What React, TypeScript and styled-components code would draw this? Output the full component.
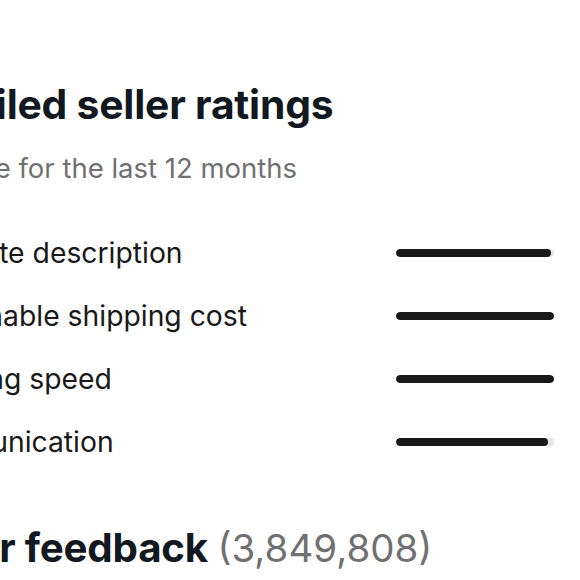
import React from "react";
import styled, { createGlobalStyle } from "styled-components";

const Global = createGlobalStyle`
  html, body { margin: 0; padding: 0; background: #ffffff; overflow: hidden; }
  body { font-family: Inter, "Noto Sans", "Liberation Sans", sans-serif; color: #111820; }
`;

const Page = styled.main`
  margin-left: -96px;
  width: calc(580px + 96px - 26px);
  padding-top: 80px;
`;

const Heading = styled.h2<{ $size: number }>`
  margin: 0;
  font-size: ${(p) => p.$size}px;
  line-height: 48px;
  font-weight: 700;
  color: #111820;
  letter-spacing: -0.2px;
`;

const Subtitle = styled.p`
  margin: 22px 0 35px;
  font-size: 27.5px;
  line-height: 36px;
  color: #707070;
`;

const RatingList = styled.ul`
  list-style: none;
  margin: 0;
  padding: 0;
  display: flex;
  flex-direction: column;
`;

const Row = styled.li`
  height: 63px;
  display: flex;
  align-items: center;
  justify-content: space-between;
`;

const Label = styled.span`
  font-size: 28.3px;
  color: #191919;
`;

const Track = styled.div`
  width: 158px;
  height: 8px;
  border-radius: 4px;
  background: #e5e5e5;
  overflow: hidden;
`;

const Fill = styled.div`
  height: 100%;
  border-radius: 4px;
  background: #191919;
`;

const FeedbackSection = styled.section`
  margin-top: 51px;
`;

const Count = styled.span`
  font-size: 38.5px;
  font-weight: 400;
  letter-spacing: 0;
  color: #707070;
`;

const ratings = [
  { label: "Accurate description", value: 98 },
  { label: "Reasonable shipping cost", value: 100 },
  { label: "Shipping speed", value: 100 },
  { label: "Communication", value: 96 },
];

export default function App() {
  return (
    <>
      <Global />
      <Page>
        <Heading $size={40.8}>Detailed seller ratings</Heading>
        <Subtitle>Average for the last 12 months</Subtitle>
        <RatingList>
          {ratings.map((r) => (
            <Row key={r.label}>
              <Label>{r.label}</Label>
              <Track>
                <Fill style={{ width: `${r.value}%` }} />
              </Track>
            </Row>
          ))}
        </RatingList>
        <FeedbackSection>
          <Heading $size={40.3}>
            Seller feedback <Count>(3,849,808)</Count>
          </Heading>
        </FeedbackSection>
      </Page>
    </>
  );
}
